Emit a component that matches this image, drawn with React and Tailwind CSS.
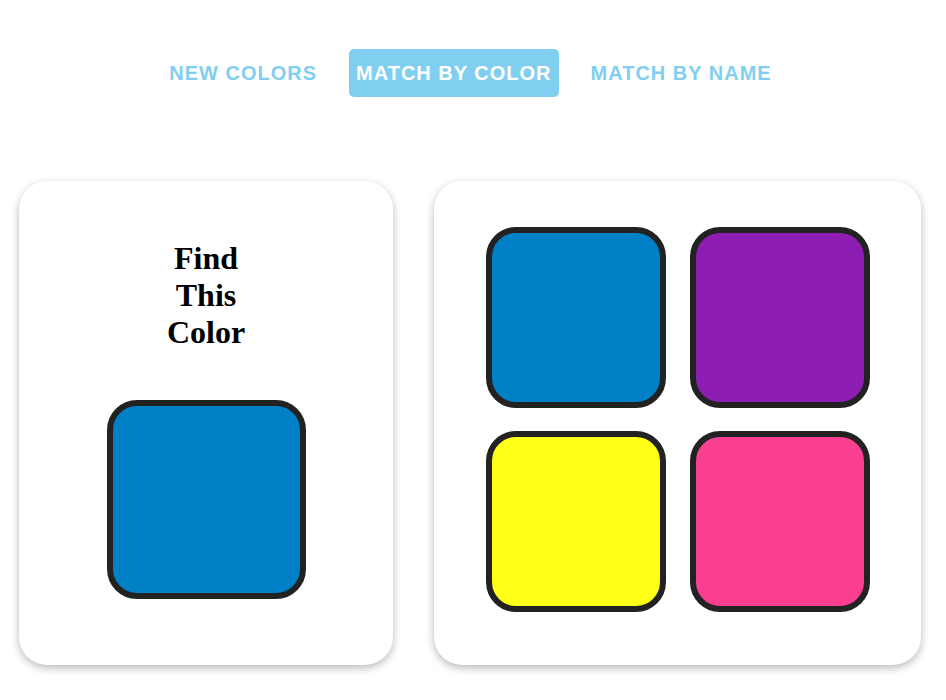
import React from 'react';

const navItems = [
  { label: 'NEW COLORS', active: false },
  { label: 'MATCH BY COLOR', active: true },
  { label: 'MATCH BY NAME', active: false },
];

const choices = ['#0081c7', '#8e1eb3', '#ffff18', '#fb3f90'];

const Swatch = ({ color, size }) => (
  <div
    className={`${size} border-[6px] border-[#222222] rounded-[30px]`}
    style={{ backgroundColor: color }}
  />
);

export default function App() {
  return (
    <div className="min-h-[700px] bg-white font-['Liberation_Sans',Arial,sans-serif]">
      <nav className="flex justify-center gap-[26px] pt-[49px] pr-[5px]">
        {navItems.map(item => (
          <button
            key={item.label}
            className={
              item.active
                ? 'h-12 px-[7px] rounded-[5px] bg-[#81cff0] text-white text-[20px] font-bold tracking-[1px]'
                : 'h-12 px-[6px] rounded-[5px] text-[#81cff0] text-[20px] font-bold tracking-[1px]'
            }
          >
            {item.label}
          </button>
        ))}
      </nav>

      <div className="flex gap-[41px] mt-[84px] pl-[19px] pr-[25px]">
        <section className="w-[374px] h-[484px] rounded-[28px] bg-white shadow-[0_3px_8px_rgba(0,0,0,0.28)] flex flex-col items-center pt-[59px]">
          <h1 className="w-[100px] text-center font-['Liberation_Serif','Times_New_Roman',serif] text-[32px] font-bold leading-[37px] text-black">
            Find This Color
          </h1>
          <div className="mt-[49px]">
            <Swatch color="#0081c7" size="w-[199px] h-[199px]" />
          </div>
        </section>

        <section className="flex-1 h-[484px] rounded-[28px] bg-white shadow-[0_3px_8px_rgba(0,0,0,0.28)] pt-[46px]">
          <div className="grid grid-cols-[180px_180px] gap-x-[24px] gap-y-[23px] justify-center">
            {choices.map(c => (
              <Swatch key={c} color={c} size="w-[180px] h-[181px]" />
            ))}
          </div>
        </section>
      </div>
    </div>
  );
}
